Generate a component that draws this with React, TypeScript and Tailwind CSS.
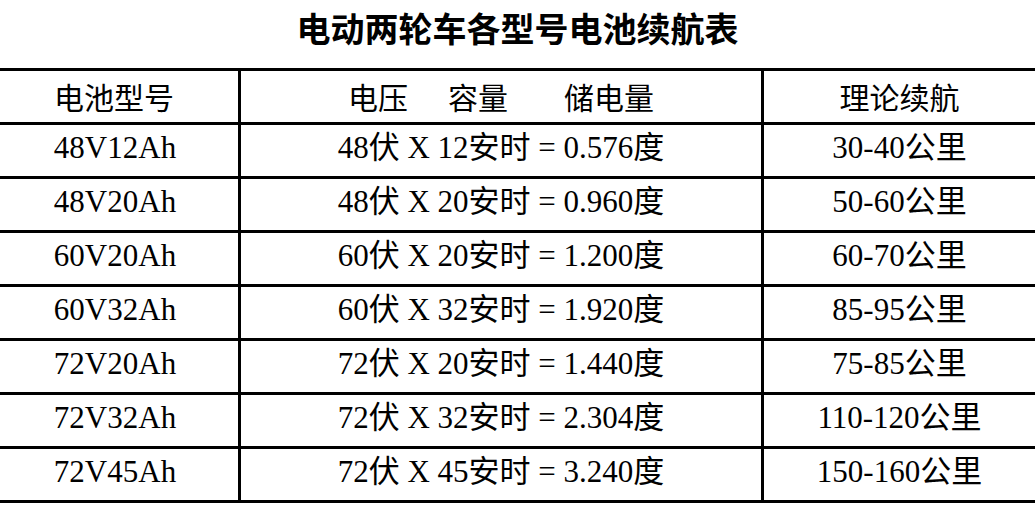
const rows = [
  { model: "48V12Ah", v: "48", ah: "12", kwh: "0.576", range: "30-40" },
  { model: "48V20Ah", v: "48", ah: "20", kwh: "0.960", range: "50-60" },
  { model: "60V20Ah", v: "60", ah: "20", kwh: "1.200", range: "60-70" },
  { model: "60V32Ah", v: "60", ah: "32", kwh: "1.920", range: "85-95" },
  { model: "72V20Ah", v: "72", ah: "20", kwh: "1.440", range: "75-85" },
  { model: "72V32Ah", v: "72", ah: "32", kwh: "2.304", range: "110-120" },
  { model: "72V45Ah", v: "72", ah: "45", kwh: "3.240", range: "150-160" },
]

const sans = "font-['Noto_Sans_CJK_SC','Noto_Sans',sans-serif]"
const serif = "font-['Liberation_Serif','Noto_Sans_CJK_SC',serif]"

export default function App() {
  return (
    <div className="w-[1035px] h-[512px] bg-white text-black overflow-hidden">
      {/* title */}
      <div
        className={`h-[68px] leading-[56px] text-center text-[34px] font-bold ${sans}`}
      >
        电动两轮车各型号电池续航表
      </div>

      <div className="border-b-[3px] border-black">
        {/* header row */}
        <div
          className={`grid grid-cols-[238px_523px_274px] h-[54px] border-t-[3px] border-black text-[30px] leading-[51px] ${sans}`}
        >
          <div className="text-center pr-[10px]">电池型号</div>
          <div className="flex justify-center border-l-[3px] border-black">
            <span>电压</span>
            <span className="ml-[40px]">容量</span>
            <span className="ml-[56px]">储电量</span>
          </div>
          <div className="text-center border-l-[3px] border-black">理论续航</div>
        </div>

        {rows.map((r) => (
          <div
            key={r.model}
            className={`grid grid-cols-[238px_523px_274px] h-[54px] border-t-[3px] border-black text-[31px] leading-[46px] ${serif}`}
          >
            <div className="text-center pr-[8px]">{r.model}</div>
            <div className="text-center border-l-[3px] border-black">
              {r.v}伏 X {r.ah}安时 = {r.kwh}度
            </div>
            <div className="text-center border-l-[3px] border-black">
              {r.range}公里
            </div>
          </div>
        ))}
      </div>
    </div>
  )
}
